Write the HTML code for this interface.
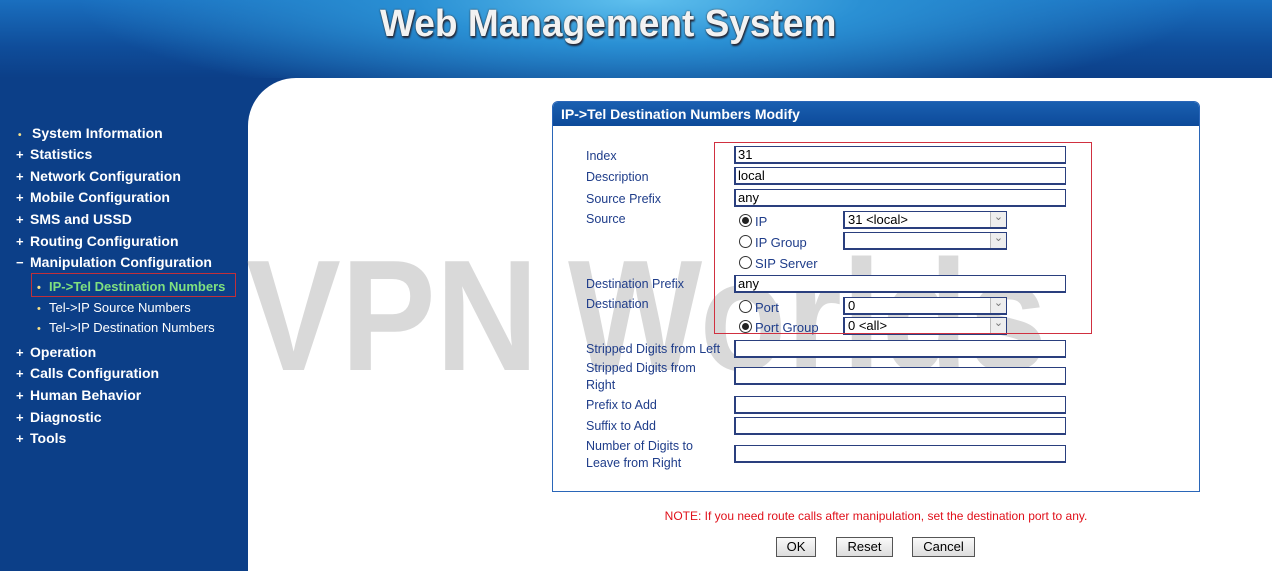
<!DOCTYPE html><html><head><style>
body{margin:0;width:1272px;height:571px;overflow:hidden;position:relative;font-family:"Liberation Sans",Arial,sans-serif;background:#0c3f88}
.hdr{position:absolute;left:0;top:0;width:1272px;height:78px;background:radial-gradient(ellipse 560px 110px at 640px 0px,#5fc0ee 0%,#2a90d4 40%,rgba(20,90,170,0) 100%),linear-gradient(180deg,#1a6fbf 0%,#0f4d9a 60%,#0c3f88 100%)}
.title{position:absolute;left:380px;top:3px;font-size:38px;font-weight:bold;color:#f2f2f2;text-shadow:0 0 2px #333,1px 2px 2px #223;transform:scaleX(0.975);transform-origin:left top;white-space:nowrap}
.main{position:absolute;left:248px;top:78px;width:1024px;height:493px;background:#fff;border-top-left-radius:48px}
.nav{position:absolute;color:#fff;font-weight:bold;font-size:14px;white-space:nowrap}
.nav b{display:inline-block;width:14px;font-size:13px}
.sub{position:absolute;color:#fff;font-size:13px;white-space:nowrap}
.sub i{font-style:normal;color:#f5e08a;display:inline-block;width:12px;font-size:11px}
.panel{position:absolute;left:552px;top:101px;width:646px;height:389px;border:1px solid #2a66b8;border-radius:6px 6px 0 0;background:#fff}
.ph{height:24px;background:linear-gradient(#1a5fb0,#0d4a9a);color:#fff;font-weight:bold;font-size:14px;line-height:24px;padding-left:8px;border-radius:5px 5px 0 0}
.l{position:absolute;left:586px;color:#1f3d8a;font-size:12.5px;line-height:17px}
.in{position:absolute;left:734px;width:327px;height:15px;border:2px solid #2a3f7e;border-width:1px 1px 2px 2px;background:#fff;font-size:13px;line-height:16px;padding-left:2px;color:#000}
.sel{position:absolute;left:843px;width:158px;height:15px;border:1px solid #555;border-width:1px 1px 2px 2px;border-color:#2a3f7e;background:#fff;font-size:13px;line-height:16px;padding-left:3px}
.sel:after{content:"⌄";position:absolute;right:0;top:0;width:15px;height:15px;background:#eee;border-left:1px solid #bbb;color:#777;font-size:11px;text-align:center;line-height:10px}
.r{position:absolute;left:739px;font-size:13px;color:#1f3d8a;line-height:16px}
.r span{display:inline-block;width:11px;height:11px;border:1px solid #333;border-radius:50%;vertical-align:-1px;margin-right:3px;position:relative;background:#fff}
.r span.on:after{content:"";position:absolute;left:2px;top:2px;width:7px;height:7px;border-radius:50%;background:#222}
.btn{position:absolute;top:537px;height:18px;border:1px solid #555;background:linear-gradient(#fafafa,#ddd);font-size:13px;text-align:center;line-height:18px;color:#000}
.wm{position:absolute;top:226px;font-size:158px;font-weight:bold;color:rgba(130,130,130,0.3);white-space:nowrap;transform-origin:left top}
</style></head><body>
<div class="hdr"></div>
<div class="title">Web Management System</div>
<div class="main"></div>

<div class="nav" style="left:18px;top:125px"><b style="font-size:10px;color:#f5e08a">•</b>System Information</div>
<div class="nav" style="left:16px;top:146px"><b>+</b>Statistics</div>
<div class="nav" style="left:16px;top:168px"><b>+</b>Network Configuration</div>
<div class="nav" style="left:16px;top:189px"><b>+</b>Mobile Configuration</div>
<div class="nav" style="left:16px;top:211px"><b>+</b>SMS and USSD</div>
<div class="nav" style="left:16px;top:233px"><b>+</b>Routing Configuration</div>
<div class="nav" style="left:16px;top:254px"><b>−</b>Manipulation Configuration</div>
<div style="position:absolute;left:31px;top:273px;width:205px;height:24px;border:1px solid #c0303a;box-sizing:border-box"></div>
<div class="sub" style="left:37px;top:279px;color:#7fe07f;font-weight:bold"><i>•</i>IP-&gt;Tel Destination Numbers</div>
<div class="sub" style="left:37px;top:300px"><i>•</i>Tel-&gt;IP Source Numbers</div>
<div class="sub" style="left:37px;top:320px"><i>•</i>Tel-&gt;IP Destination Numbers</div>
<div class="nav" style="left:16px;top:344px"><b>+</b>Operation</div>
<div class="nav" style="left:16px;top:365px"><b>+</b>Calls Configuration</div>
<div class="nav" style="left:16px;top:387px"><b>+</b>Human Behavior</div>
<div class="nav" style="left:16px;top:409px"><b>+</b>Diagnostic</div>
<div class="nav" style="left:16px;top:430px"><b>+</b>Tools</div>

<div class="panel"><div class="ph">IP-&gt;Tel Destination Numbers Modify</div></div>

<div class="wm" style="left:246px;transform:scaleX(0.9)">VPN</div>
<div class="wm" style="left:568px;transform:scaleX(0.9)">Worlds</div>

<div class="l" style="top:148px">Index</div>
<div class="l" style="top:169px">Description</div>
<div class="l" style="top:191px">Source Prefix</div>
<div class="l" style="top:211px">Source</div>
<div class="l" style="top:276px">Destination Prefix</div>
<div class="l" style="top:296px">Destination</div>
<div class="l" style="top:341px">Stripped Digits from Left</div>
<div class="l" style="top:360px">Stripped Digits from<br>Right</div>
<div class="l" style="top:397px">Prefix to Add</div>
<div class="l" style="top:418px">Suffix to Add</div>
<div class="l" style="top:438px">Number of Digits to<br>Leave from Right</div>

<div class="in" style="top:146px">31</div>
<div class="in" style="top:167px">local</div>
<div class="in" style="top:189px">any</div>
<div class="r" style="top:214px"><span class="on"></span>IP</div>
<div class="sel" style="top:211px">31 &lt;local&gt;</div>
<div class="r" style="top:235px"><span></span>IP Group</div>
<div class="sel" style="top:232px"></div>
<div class="r" style="top:256px"><span></span>SIP Server</div>
<div class="in" style="top:275px">any</div>
<div class="r" style="top:300px"><span></span>Port</div>
<div class="sel" style="top:297px">0</div>
<div class="r" style="top:320px"><span class="on"></span>Port Group</div>
<div class="sel" style="top:317px">0 &lt;all&gt;</div>
<div class="in" style="top:340px"></div>
<div class="in" style="top:367px"></div>
<div class="in" style="top:396px"></div>
<div class="in" style="top:417px"></div>
<div class="in" style="top:445px"></div>

<div style="position:absolute;left:714px;top:142px;width:378px;height:192px;border:1px solid #d03040;box-sizing:border-box"></div>

<div style="position:absolute;left:552px;width:648px;top:509px;text-align:center;color:#e0101a;font-size:12px">NOTE: If you need route calls after manipulation, set the destination port to any.</div>
<div class="btn" style="left:776px;width:38px">OK</div>
<div class="btn" style="left:836px;width:55px">Reset</div>
<div class="btn" style="left:912px;width:61px">Cancel</div>
</body></html>
